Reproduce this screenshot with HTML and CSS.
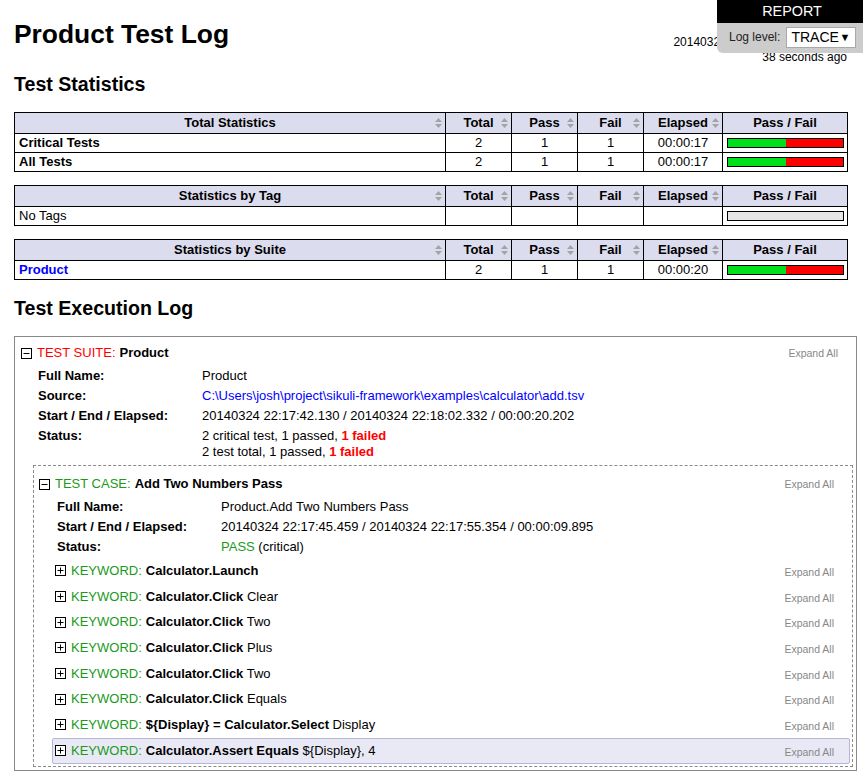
FILE: index.html
```html
<!DOCTYPE html>
<html>
<head>
<meta charset="utf-8">
<title>Product Test Log</title>
<link rel="stylesheet" href="styles.css">
</head>
<body>
<div class="page">
  <div class="header">
    <h1>Product Test Log</h1>
    <div class="generated">Generated<br>20140324 22:18:02 GMT +09:00<br>38 seconds ago</div>
  </div>

  <div class="top-right">
    <div class="report-link">REPORT</div>
    <div class="log-level">
      <span>Log level:</span>
      <span class="select"><span>TRACE</span><span class="arrow">&#9660;</span></span>
    </div>
  </div>

  <h2 class="stats-title">Test Statistics</h2>

  <table class="stats">
    <colgroup><col class="c-name"><col class="c-num"><col class="c-num"><col class="c-num"><col class="c-el"><col class="c-graph"></colgroup>
    <thead>
      <tr>
        <th>Total Statistics<svg class="sort" viewBox="0 0 7 10" width="7" height="10"><path d="M0 4L3.5 0L7 4Z M0 6L3.5 10L7 6Z"/></svg></th>
        <th>Total<svg class="sort" viewBox="0 0 7 10" width="7" height="10"><path d="M0 4L3.5 0L7 4Z M0 6L3.5 10L7 6Z"/></svg></th>
        <th>Pass<svg class="sort" viewBox="0 0 7 10" width="7" height="10"><path d="M0 4L3.5 0L7 4Z M0 6L3.5 10L7 6Z"/></svg></th>
        <th>Fail<svg class="sort" viewBox="0 0 7 10" width="7" height="10"><path d="M0 4L3.5 0L7 4Z M0 6L3.5 10L7 6Z"/></svg></th>
        <th>Elapsed<svg class="sort" viewBox="0 0 7 10" width="7" height="10"><path d="M0 4L3.5 0L7 4Z M0 6L3.5 10L7 6Z"/></svg></th>
        <th>Pass / Fail</th>
      </tr>
    </thead>
    <tbody>
      <tr>
        <td class="name bold">Critical Tests</td><td class="num">2</td><td class="num">1</td><td class="num">1</td><td class="num">00:00:17</td>
        <td class="graph"><div class="bar"><div class="pass-bar" style="width:50%"></div><div class="fail-bar" style="width:50%"></div></div></td>
      </tr>
      <tr>
        <td class="name bold">All Tests</td><td class="num">2</td><td class="num">1</td><td class="num">1</td><td class="num">00:00:17</td>
        <td class="graph"><div class="bar"><div class="pass-bar" style="width:50%"></div><div class="fail-bar" style="width:50%"></div></div></td>
      </tr>
    </tbody>
  </table>

  <table class="stats">
    <colgroup><col class="c-name"><col class="c-num"><col class="c-num"><col class="c-num"><col class="c-el"><col class="c-graph"></colgroup>
    <thead>
      <tr>
        <th>Statistics by Tag<svg class="sort" viewBox="0 0 7 10" width="7" height="10"><path d="M0 4L3.5 0L7 4Z M0 6L3.5 10L7 6Z"/></svg></th>
        <th>Total<svg class="sort" viewBox="0 0 7 10" width="7" height="10"><path d="M0 4L3.5 0L7 4Z M0 6L3.5 10L7 6Z"/></svg></th>
        <th>Pass<svg class="sort" viewBox="0 0 7 10" width="7" height="10"><path d="M0 4L3.5 0L7 4Z M0 6L3.5 10L7 6Z"/></svg></th>
        <th>Fail<svg class="sort" viewBox="0 0 7 10" width="7" height="10"><path d="M0 4L3.5 0L7 4Z M0 6L3.5 10L7 6Z"/></svg></th>
        <th>Elapsed<svg class="sort" viewBox="0 0 7 10" width="7" height="10"><path d="M0 4L3.5 0L7 4Z M0 6L3.5 10L7 6Z"/></svg></th>
        <th>Pass / Fail</th>
      </tr>
    </thead>
    <tbody>
      <tr>
        <td class="name">No Tags</td><td class="num"></td><td class="num"></td><td class="num"></td><td class="num"></td>
        <td class="graph"><div class="bar empty"></div></td>
      </tr>
    </tbody>
  </table>

  <table class="stats">
    <colgroup><col class="c-name"><col class="c-num"><col class="c-num"><col class="c-num"><col class="c-el"><col class="c-graph"></colgroup>
    <thead>
      <tr>
        <th>Statistics by Suite<svg class="sort" viewBox="0 0 7 10" width="7" height="10"><path d="M0 4L3.5 0L7 4Z M0 6L3.5 10L7 6Z"/></svg></th>
        <th>Total<svg class="sort" viewBox="0 0 7 10" width="7" height="10"><path d="M0 4L3.5 0L7 4Z M0 6L3.5 10L7 6Z"/></svg></th>
        <th>Pass<svg class="sort" viewBox="0 0 7 10" width="7" height="10"><path d="M0 4L3.5 0L7 4Z M0 6L3.5 10L7 6Z"/></svg></th>
        <th>Fail<svg class="sort" viewBox="0 0 7 10" width="7" height="10"><path d="M0 4L3.5 0L7 4Z M0 6L3.5 10L7 6Z"/></svg></th>
        <th>Elapsed<svg class="sort" viewBox="0 0 7 10" width="7" height="10"><path d="M0 4L3.5 0L7 4Z M0 6L3.5 10L7 6Z"/></svg></th>
        <th>Pass / Fail</th>
      </tr>
    </thead>
    <tbody>
      <tr>
        <td class="name bold"><a class="link" href="#s1">Product</a></td><td class="num">2</td><td class="num">1</td><td class="num">1</td><td class="num">00:00:20</td>
        <td class="graph"><div class="bar"><div class="pass-bar" style="width:50%"></div><div class="fail-bar" style="width:50%"></div></div></td>
      </tr>
    </tbody>
  </table>

  <h2 class="exec-title">Test Execution Log</h2>

  <div class="suite" id="s1">
    <div class="el-header suite-header">
      <svg class="toggle" viewBox="0 0 11 11" width="11" height="11"><rect x="0.5" y="0.5" width="10" height="10"/><path d="M2.5 5.5H8.5"/></svg>
      <span class="label fail-label">TEST SUITE:</span>
      <span class="el-name">Product</span>
      <span class="expand">Expand All</span>
    </div>
    <table class="meta">
      <tr><th>Full Name:</th><td>Product</td></tr>
      <tr><th>Source:</th><td><a class="link" href="#">C:\Users\josh\project\sikuli-framework\examples\calculator\add.tsv</a></td></tr>
      <tr><th>Start / End / Elapsed:</th><td>20140324 22:17:42.130 / 20140324 22:18:02.332 / 00:00:20.202</td></tr>
      <tr><th>Status:</th><td>2 critical test, 1 passed, <span class="fail-text">1 failed</span><br>2 test total, 1 passed, <span class="fail-text">1 failed</span></td></tr>
    </table>

    <div class="test">
      <div class="el-header test-header">
        <svg class="toggle" viewBox="0 0 11 11" width="11" height="11"><rect x="0.5" y="0.5" width="10" height="10"/><path d="M2.5 5.5H8.5"/></svg>
        <span class="label pass-label">TEST CASE:</span>
        <span class="el-name">Add Two Numbers Pass</span>
        <span class="expand">Expand All</span>
      </div>
      <table class="meta">
        <tr><th>Full Name:</th><td>Product.Add Two Numbers Pass</td></tr>
        <tr><th>Start / End / Elapsed:</th><td>20140324 22:17:45.459 / 20140324 22:17:55.354 / 00:00:09.895</td></tr>
        <tr><th>Status:</th><td><span class="pass-label">PASS</span> (critical)</td></tr>
      </table>

      <div class="keywords">
        <div class="kw">
          <div class="el-header kw-header">
            <svg class="toggle" viewBox="0 0 11 11" width="11" height="11"><rect x="0.5" y="0.5" width="10" height="10"/><path d="M2.5 5.5H8.5M5.5 2.5V8.5"/></svg>
            <span class="label pass-label">KEYWORD:</span>
            <span><b>Calculator.Launch</b></span>
            <span class="expand">Expand All</span>
          </div>
        </div>
        <div class="kw">
          <div class="el-header kw-header">
            <svg class="toggle" viewBox="0 0 11 11" width="11" height="11"><rect x="0.5" y="0.5" width="10" height="10"/><path d="M2.5 5.5H8.5M5.5 2.5V8.5"/></svg>
            <span class="label pass-label">KEYWORD:</span>
            <span><b>Calculator.Click</b> Clear</span>
            <span class="expand">Expand All</span>
          </div>
        </div>
        <div class="kw">
          <div class="el-header kw-header">
            <svg class="toggle" viewBox="0 0 11 11" width="11" height="11"><rect x="0.5" y="0.5" width="10" height="10"/><path d="M2.5 5.5H8.5M5.5 2.5V8.5"/></svg>
            <span class="label pass-label">KEYWORD:</span>
            <span><b>Calculator.Click</b> Two</span>
            <span class="expand">Expand All</span>
          </div>
        </div>
        <div class="kw">
          <div class="el-header kw-header">
            <svg class="toggle" viewBox="0 0 11 11" width="11" height="11"><rect x="0.5" y="0.5" width="10" height="10"/><path d="M2.5 5.5H8.5M5.5 2.5V8.5"/></svg>
            <span class="label pass-label">KEYWORD:</span>
            <span><b>Calculator.Click</b> Plus</span>
            <span class="expand">Expand All</span>
          </div>
        </div>
        <div class="kw">
          <div class="el-header kw-header">
            <svg class="toggle" viewBox="0 0 11 11" width="11" height="11"><rect x="0.5" y="0.5" width="10" height="10"/><path d="M2.5 5.5H8.5M5.5 2.5V8.5"/></svg>
            <span class="label pass-label">KEYWORD:</span>
            <span><b>Calculator.Click</b> Two</span>
            <span class="expand">Expand All</span>
          </div>
        </div>
        <div class="kw">
          <div class="el-header kw-header">
            <svg class="toggle" viewBox="0 0 11 11" width="11" height="11"><rect x="0.5" y="0.5" width="10" height="10"/><path d="M2.5 5.5H8.5M5.5 2.5V8.5"/></svg>
            <span class="label pass-label">KEYWORD:</span>
            <span><b>Calculator.Click</b> Equals</span>
            <span class="expand">Expand All</span>
          </div>
        </div>
        <div class="kw">
          <div class="el-header kw-header">
            <svg class="toggle" viewBox="0 0 11 11" width="11" height="11"><rect x="0.5" y="0.5" width="10" height="10"/><path d="M2.5 5.5H8.5M5.5 2.5V8.5"/></svg>
            <span class="label pass-label">KEYWORD:</span>
            <span><b>${Display} = Calculator.Select</b> Display</span>
            <span class="expand">Expand All</span>
          </div>
        </div>
        <div class="kw kw-hover">
          <div class="el-header kw-header">
            <svg class="toggle" viewBox="0 0 11 11" width="11" height="11"><rect x="0.5" y="0.5" width="10" height="10"/><path d="M2.5 5.5H8.5M5.5 2.5V8.5"/></svg>
            <span class="label pass-label">KEYWORD:</span>
            <span><b>Calculator.Assert Equals</b> ${Display}, 4</span>
            <span class="expand">Expand All</span>
          </div>
        </div>
      </div>
    </div>
  </div>
</div>
</body>
</html>
```

FILE: styles.css
```css
* { box-sizing: border-box; }

html, body {
  margin: 0;
  padding: 0;
  background: #fff;
}

body {
  font-family: "Liberation Sans", Arial, sans-serif;
  font-size: 13px;
  color: #000;
}

.page {
  position: relative;
  padding: 19px 0 0 14px;
  width: 863px;
}

.header {
  display: flex;
  justify-content: space-between;
  align-items: flex-start;
  width: 833px;
}

h1 {
  margin: 0;
  font-size: 26.4px;
  line-height: 30px;
  font-weight: bold;
}

.generated {
  font-size: 12px;
  line-height: 15px;
  padding-top: 1px;
  text-align: right;
}

h2 {
  font-size: 19.6px;
  line-height: 22px;
  font-weight: bold;
  margin: 0;
}

.stats-title { margin: 8px 0 17px; }
.exec-title { margin: 17px 0 17px; }

/* top-right report panel */
.top-right {
  position: absolute;
  top: 0;
  right: 0;
  width: 146px;
  background: #ccc;
  border-bottom-left-radius: 6px;
}

.report-link {
  background: #000;
  color: #fff;
  height: 23px;
  line-height: 23px;
  text-align: center;
  font-size: 14.4px;
  padding-left: 4px;
}

.log-level {
  height: 30px;
  display: flex;
  align-items: center;
  padding: 0 6px 2px 12px;
  gap: 6px;
  font-size: 12px;
  color: #222;
}

.select {
  display: flex;
  justify-content: space-between;
  align-items: center;
  width: 70px;
  height: 21px;
  background: #fff;
  border: 1px solid #a9a9a9;
  padding: 0 5px 0 4px;
  font-size: 14px;
  color: #000;
}

.select .arrow {
  font-size: 11px;
}

/* statistics tables */
.stats {
  width: 833px;
  table-layout: fixed;
  border-collapse: collapse;
  border: 1px solid #000;
  margin-bottom: 13px;
}

.c-name { width: 431px; }
.c-num { width: 66px; }
.c-el { width: 79px; }
.c-graph { width: 125px; }

.stats th,
.stats td {
  border: 1px solid #000;
  line-height: 16px;
  font-size: 13px;
  white-space: nowrap;
}

.stats th {
  position: relative;
  background: #dcdcef;
  font-weight: bold;
  text-align: center;
  padding: 2px 4px;
}

.stats td {
  padding: 1px 4px;
}

.stats td.num { text-align: center; }
.stats td.name { text-align: left; }
.bold { font-weight: bold; }

.sort {
  position: absolute;
  right: 3px;
  top: 50%;
  margin-top: -5px;
  fill: #a3a3a3;
}

.stats td.graph {
  padding: 0 3px 0 4px;
}

.bar {
  display: flex;
  height: 10px;
  border: 1px solid #000;
  background: #e5e5e5;
}

.pass-bar { background: #00e01a; }
.fail-bar { background: #ff0000; }

a.link {
  color: #0000ff;
  text-decoration: none;
}

/* execution log */
.suite {
  width: 843px;
  border: 1px solid #888;
  padding-bottom: 3px;
}

.el-header {
  display: flex;
  align-items: baseline;
  line-height: 16px;
}

.toggle {
  align-self: center;
  flex: none;
  fill: #fff;
  stroke: #000;
  stroke-width: 1;
  margin-right: 5px;
}

.el-name { font-weight: bold; margin-left: 4px; }

.label { white-space: pre; }

.fail-label { color: #f00; }
.pass-label { color: #1a9a1a; }
.fail-text { color: #f00; font-weight: bold; }

.kw-header .label { margin-right: 4px; }

.expand {
  margin-left: auto;
  font-size: 10.5px;
  color: #888;
}

.suite-header { padding: 8px 18px 3px 6px; }

.meta {
  border-collapse: collapse;
  margin: 2px 0 0 23px;
}

.meta th,
.meta td {
  padding: 2px 0;
  line-height: 16px;
  vertical-align: top;
  text-align: left;
}

.meta th {
  width: 164px;
  font-weight: bold;
}

.test {
  margin: 3px 3px 0 18px;
  border: 1px dashed #8a8a8a;
  padding-bottom: 2px;
}

.test-header { padding: 10px 18px 3px 5px; }

.keywords {
  margin-top: 1px;
}

.kw {
  margin: 0 2px 0 18px;
  border: 1px solid transparent;
  border-radius: 2px;
}

.kw-header {
  height: 23.7px;
  padding: 0 15px 0 2px;
  align-items: center;
}

.kw-header .expand {
  align-self: center;
  padding-top: 2px;
}

.kw-hover {
  background: #e9e9f6;
  border-color: #b6b6dc;
}
```
